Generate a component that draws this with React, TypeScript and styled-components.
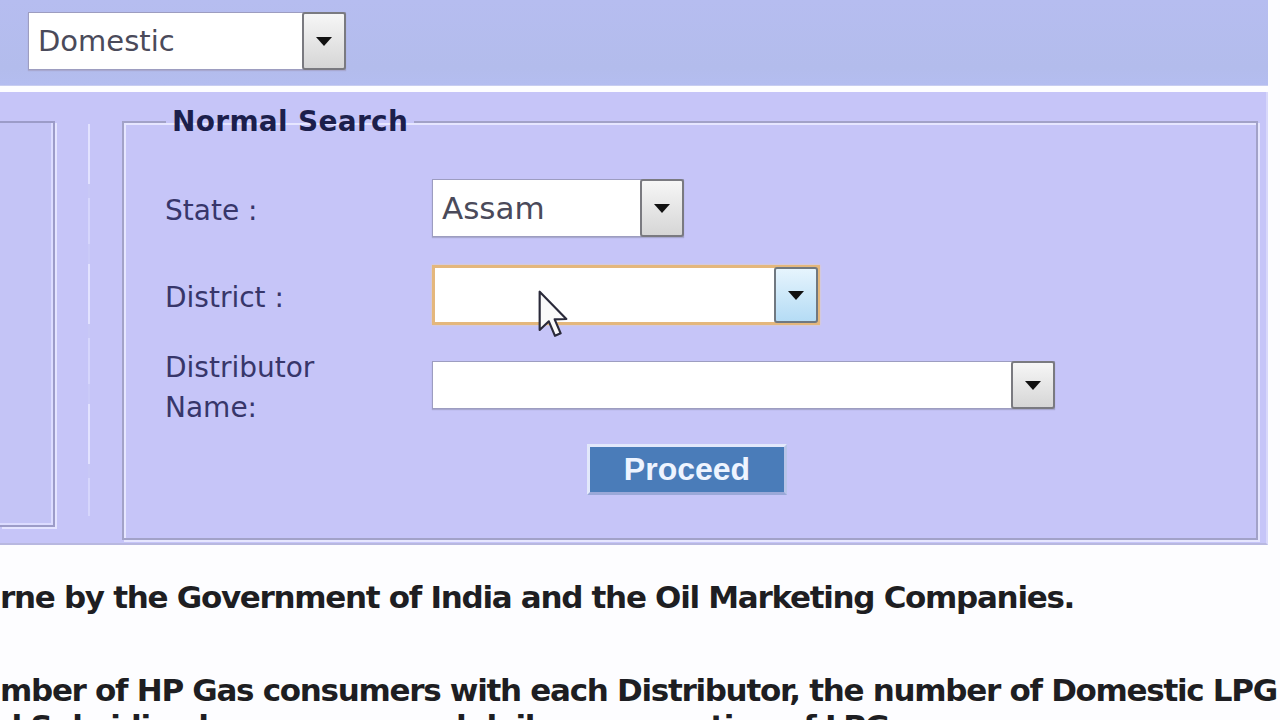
import React from "react";
import styled, { createGlobalStyle } from "styled-components";

const Global = createGlobalStyle`
  html, body { margin: 0; padding: 0; background: #fdfdff; }
  body { width: 1280px; height: 720px; overflow: hidden; font-family: "DejaVu Sans", Verdana, sans-serif; }
`;

const Page = styled.div`
  position: relative;
  width: 1280px;
  height: 720px;
  overflow: hidden;
  display: flex;
  flex-direction: column;
  & > * { flex: none; }
`;

const TopBand = styled.div`
  width: 1268px;
  height: 86px;
  box-sizing: border-box;
  padding: 12px 0 0 28px;
  background: linear-gradient(#b6bdf0, #b3bcec 80%, #b4bdf0);
  border-bottom: 1px solid #c8cdf0;
`;

const Panel = styled.div`
  margin-top: 6px;
  width: 1268px;
  height: 453px;
  box-sizing: border-box;
  background: #c6c5f8;
  border-bottom: 2px solid #b8b8e0;
  border-right: 2px solid #d8d8fa;
  display: flex;
  align-items: flex-start;
`;

const LeftBox = styled.div`
  margin-top: 29px;
  width: 55px;
  height: 406px;
  box-sizing: border-box;
  border: 2px solid #9c9cc8;
  border-left: none;
  box-shadow: 2px 2px 0 #e4e4ff, inset -2px -2px 0 #dcdcff;
  background: #c4c4f6;
`;

const Divider = styled.div`
  margin: 32px 0 0 33px;
  width: 2px;
  height: 392px;
  background: repeating-linear-gradient(#e2e2ff 0 60px, #c8c8f6 60px 74px, #d6d6fc 74px 120px, #cacaf8 120px 140px);
`;

const Fieldset = styled.fieldset`
  margin: 14px 0 0 32px;
  padding: 0 0 0 41px;
  width: 1136px;
  height: 434px;
  box-sizing: border-box;
  border: 2px solid #a2a2c8;
  box-shadow: inset 2px 2px 0 #e6e6ff, 2px 2px 0 #e6e6ff;
  min-inline-size: 0;
`;

const Legend = styled.legend`
  margin-left: 1px;
  padding: 0 6px;
  font-family: "DejaVu Sans", Verdana, sans-serif;
  font-weight: bold;
  font-size: 28px;
  line-height: 32px;
  color: #1c1f4c;
  letter-spacing: 0.3px;
`;

const Form = styled.div`
  display: flex;
  flex-direction: column;
`;

const FieldRow = styled.div<{ $mt: number }>`
  display: flex;
  align-items: center;
  margin-top: ${(p) => p.$mt}px;
`;

const Label = styled.div`
  width: 267px;
  flex: none;
  padding-top: 6px;
  font-family: "DejaVu Sans", Verdana, sans-serif;
  font-size: 28px;
  line-height: 40px;
  color: #37366a;
`;

const SelectBox = styled.div<{ $w: number; $h: number; $focus?: boolean }>`
  width: ${(p) => p.$w}px;
  height: ${(p) => p.$h}px;
  box-sizing: border-box;
  display: flex;
  align-items: stretch;
  background: #fff;
  border: ${(p) => (p.$focus ? "3px solid #e4b77c" : "1px solid #9d9dc0")};
  box-shadow: ${(p) => (p.$focus ? "0 0 2px #f0d2a8" : "0 1px 1px #a8a8d0")};
`;

const SelectText = styled.div<{ $size: number }>`
  flex: 1;
  display: flex;
  align-items: center;
  padding-left: 9px;
  font-family: "DejaVu Sans", Verdana, sans-serif;
  font-size: ${(p) => p.$size}px;
  color: #4a4a5a;
`;

const DropButton = styled.div<{ $hover?: boolean }>`
  width: 44px;
  flex: none;
  box-sizing: border-box;
  border: 2px solid ${(p) => (p.$hover ? "#707880" : "#7a7a80")};
  border-radius: 3px;
  margin: -1px -1px -1px 0;
  background: ${(p) =>
    p.$hover
      ? "linear-gradient(#e6f4fd, #cde8f9 50%, #b5dcf5)"
      : "linear-gradient(#f6f6f6, #e6e6e6 50%, #d6d6d6)"};
  display: flex;
  align-items: center;
  justify-content: center;
  &::after {
    content: "";
    width: 0;
    height: 0;
    border-left: 8px solid transparent;
    border-right: 8px solid transparent;
    border-top: 9px solid #111;
  }
`;

const ButtonRow = styled.div`
  margin-top: 16px;
  padding-left: 422px;
`;

const Proceed = styled.button`
  width: 200px;
  height: 51px;
  box-sizing: border-box;
  border: 3px solid #e2e8fb;
  border-right-color: #b8c4e8;
  border-bottom-color: #9aa8d8;
  background: #4a7cb9;
  color: #eef4ff;
  font-family: "Liberation Sans", Arial, sans-serif;
  font-weight: bold;
  font-size: 32px;
  padding: 0;
  cursor: pointer;
`;

const Body = styled.div`
  margin-top: 36px;
  font-family: "DejaVu Sans", Verdana, sans-serif;
  font-weight: bold;
  font-size: 31px;
  line-height: 33px;
  color: #1e1e22;
  white-space: nowrap;
`;

const Para = styled.p<{ $mb: number }>`
  margin: 0 0 ${(p) => p.$mb}px 0;
  letter-spacing: -1.3px;
`;

const ContinuedLine = styled.span`
  display: block;
  margin-top: 3px;
`;

const Cursor = styled.svg`
  position: absolute;
  left: 538px;
  top: 290px;
`;

function Select(props: { w: number; h: number; text?: string; focus?: boolean; hover?: boolean; size?: number }) {
  return (
    <SelectBox $w={props.w} $h={props.h} $focus={props.focus}>
      <SelectText $size={props.size ?? 29}>{props.text ?? ""}</SelectText>
      <DropButton $hover={props.hover} />
    </SelectBox>
  );
}

export default function App() {
  return (
    <>
      <Global />
      <Page>
        <TopBand>
          <Select w={318} h={58} text="Domestic" />
        </TopBand>
        <Panel>
          <LeftBox />
          <Divider />
          <Fieldset>
            <Legend>Normal Search</Legend>
            <Form>
              <FieldRow $mt={41}>
                <Label>State :</Label>
                <Select w={252} h={58} text="Assam" size={31} />
              </FieldRow>
              <FieldRow $mt={28}>
                <Label>District :</Label>
                <Select w={388} h={60} focus hover />
              </FieldRow>
              <FieldRow $mt={17}>
                <Label>
                  Distributor
                  <br />
                  Name:
                </Label>
                <Select w={623} h={48} />
              </FieldRow>
              <ButtonRow>
                <Proceed>Proceed</Proceed>
              </ButtonRow>
            </Form>
          </Fieldset>
        </Panel>
        <Body>
          <Para $mb={60}>rne by the Government of India and the Oil Marketing Companies.</Para>
          <Para $mb={0}>
            mber of HP Gas consumers with each Distributor, the number of Domestic LPG
            <ContinuedLine>d Subsidised consumers and daily consumption of LPG</ContinuedLine>
          </Para>
        </Body>
        <Cursor width="30" height="50" viewBox="0 0 18 30">
          <path
            d="M1 1 L1 24 L6.5 18.8 L10.2 27.5 L13.6 26 L10 17.6 L17 17.4 Z"
            fill="#fafafa"
            stroke="#2a2a3a"
            strokeWidth="1.3"
            strokeLinejoin="round"
          />
        </Cursor>
      </Page>
    </>
  );
}
